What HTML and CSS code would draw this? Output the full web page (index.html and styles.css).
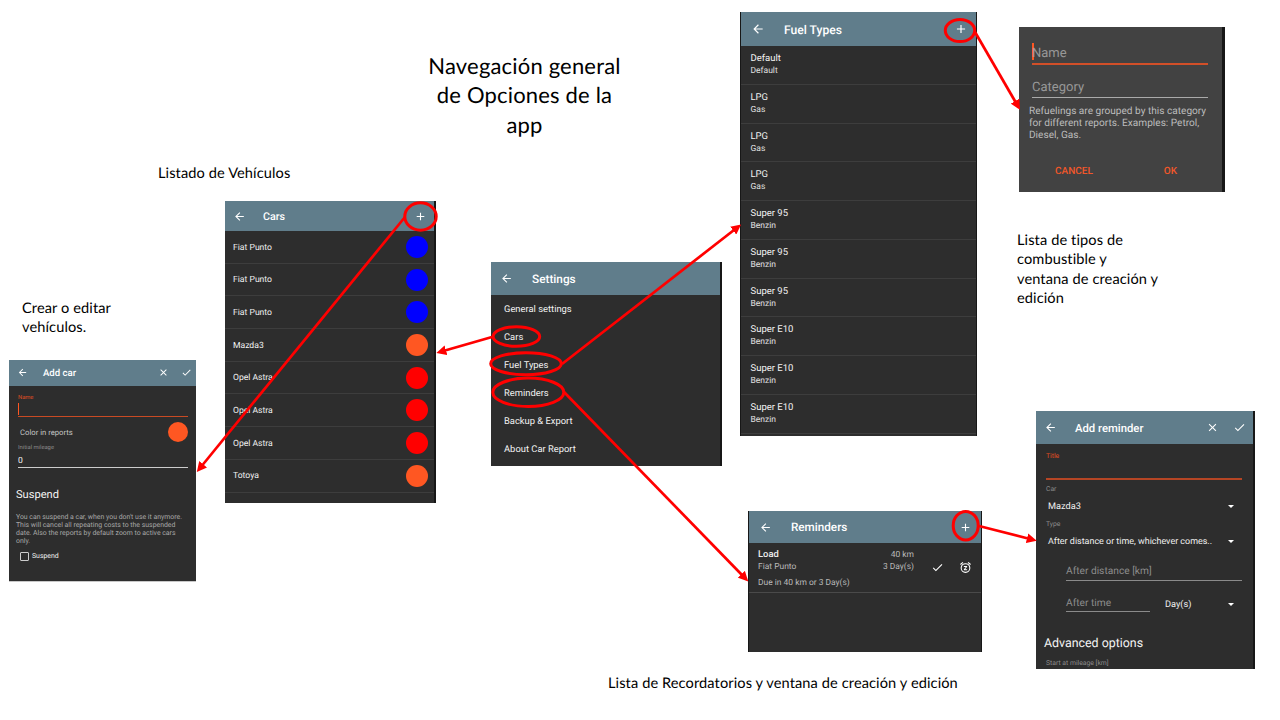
FILE: index.html
```html
<!DOCTYPE html>
<html lang="es">
<head>
<meta charset="utf-8">
<title>Navegación general de Opciones de la app</title>
<link rel="stylesheet" href="styles.css">
</head>
<body>
<svg class="defs" width="0" height="0">
  <symbol id="back" viewBox="0 0 24 24"><path d="M20 11H7.800l5.600-5.600L12 4l-8 8 8 8 1.400-1.400L7.800 13H20z"/></symbol>
  <symbol id="plus" viewBox="0 0 24 24"><path d="M19 13h-6v6h-2v-6H5v-2h6V5h2v6h6z"/></symbol>
  <symbol id="close" viewBox="0 0 24 24"><path d="M19 6.400 17.600 5 12 10.600 6.400 5 5 6.400 10.600 12 5 17.600 6.400 19 12 13.400 17.600 19 19 17.600 13.400 12z"/></symbol>
  <symbol id="check" viewBox="0 0 24 24"><path d="M9 16.200 4.800 12l-1.400 1.400L9 19 21 7l-1.400-1.400z"/></symbol>
  <symbol id="snooze" viewBox="0 0 24 24"><path d="M7.900 3.400 6.600 1.900 2 5.700l1.300 1.500zM22 5.700l-4.600-3.900-1.300 1.500 4.600 3.900zM12 4a9 9 0 1 0 0 18 9 9 0 0 0 0-18zm0 16a7 7 0 1 1 0-14 7 7 0 0 1 0 14zM9 11h3.600L9 15.200V17h6v-2h-3.600l3.600-4.200V9H9z"/></symbol>
</svg>
<main class="board">
  <h1 class="title">Navegación general<br>de Opciones de la<br>app</h1>
  <p class="note note-cars">Listado de Vehículos</p>
  <p class="note note-edit">Crear o editar<br>vehículos.</p>
  <p class="note note-fuel">Lista de tipos de<br>combustible y<br>ventana de creación y<br>edición</p>
  <p class="note note-reminders">Lista de Recordatorios y ventana de creación y edición</p>

  <section class="panel add-car">
    <header class="bar"><svg class="icon"><use href="#back"/></svg><h2>Add car</h2><svg class="icon"><use href="#close"/></svg><svg class="icon"><use href="#check"/></svg></header>
    <div class="form">
      <label class="hint active">Name</label>
      <div class="input focused"><i class="caret"></i></div>
      <div class="color-row"><span>Color in reports</span><i class="dot orange"></i></div>
      <label class="hint">Initial mileage</label>
      <div class="input mileage">0</div>
    </div>
    <h3>Suspend</h3>
    <p class="help">You can suspend a car, when you don't use it anymore.<br>This will cancel all repeating costs to the suspended<br>date. Also the reports by default zoom to active cars<br>only.</p>
    <div class="check-row"><i class="box"></i><span>Suspend</span></div>
  </section>

  <section class="panel cars">
    <header class="bar"><svg class="icon"><use href="#back"/></svg><h2>Cars</h2><svg class="icon"><use href="#plus"/></svg></header>
    <ul>
      <li><span>Fiat Punto</span><i class="dot blue"></i></li>
      <li><span>Fiat Punto</span><i class="dot blue"></i></li>
      <li><span>Fiat Punto</span><i class="dot blue"></i></li>
      <li><span>Mazda3</span><i class="dot orange"></i></li>
      <li><span>Opel Astra</span><i class="dot red"></i></li>
      <li><span>Opel Astra</span><i class="dot red"></i></li>
      <li><span>Opel Astra</span><i class="dot red"></i></li>
      <li><span>Totoya</span><i class="dot orange"></i></li>
    </ul>
  </section>

  <section class="panel settings">
    <header class="bar"><svg class="icon"><use href="#back"/></svg><h2>Settings</h2></header>
    <ul>
      <li>General settings</li>
      <li>Cars</li>
      <li>Fuel Types</li>
      <li>Reminders</li>
      <li>Backup &amp; Export</li>
      <li>About Car Report</li>
    </ul>
  </section>

  <section class="panel fuel">
    <header class="bar"><svg class="icon"><use href="#back"/></svg><h2>Fuel Types</h2><svg class="icon"><use href="#plus"/></svg></header>
    <ul>
      <li><b>Default</b><small>Default</small></li>
      <li><b>LPG</b><small>Gas</small></li>
      <li><b>LPG</b><small>Gas</small></li>
      <li><b>LPG</b><small>Gas</small></li>
      <li><b>Super 95</b><small>Benzin</small></li>
      <li><b>Super 95</b><small>Benzin</small></li>
      <li><b>Super 95</b><small>Benzin</small></li>
      <li><b>Super E10</b><small>Benzin</small></li>
      <li><b>Super E10</b><small>Benzin</small></li>
      <li><b>Super E10</b><small>Benzin</small></li>
    </ul>
  </section>

  <section class="panel dialog">
    <div class="field name"><i class="caret"></i>Name</div>
    <div class="field category">Category</div>
    <p>Refuelings are grouped by this category<br>for different reports. Examples: Petrol,<br>Diesel, Gas.</p>
    <div class="actions"><span class="cancel">CANCEL</span><span>OK</span></div>
  </section>

  <section class="panel reminders">
    <header class="bar"><svg class="icon"><use href="#back"/></svg><h2>Reminders</h2><svg class="icon"><use href="#plus"/></svg></header>
    <div class="reminder">
      <div class="what"><b>Load</b><span>Fiat Punto</span><span class="due">Due in 40 km or 3 Day(s)</span></div>
      <div class="when"><span>40 km</span><span>3 Day(s)</span></div>
      <svg class="icon"><use href="#check"/></svg>
      <svg class="icon"><use href="#snooze"/></svg>
    </div>
  </section>

  <section class="panel add-reminder">
    <header class="bar"><svg class="icon"><use href="#back"/></svg><h2>Add reminder</h2><svg class="icon"><use href="#close"/></svg><svg class="icon"><use href="#check"/></svg></header>
    <label class="hint active">Title</label>
    <div class="line"></div>
    <label class="hint">Car</label>
    <div class="select"><span>Mazda3</span><i class="arrow"></i></div>
    <label class="hint type">Type</label>
    <div class="select kind"><span>After distance or time, whichever comes..</span><i class="arrow"></i></div>
    <div class="after distance">After distance [km]</div>
    <div class="time-row"><div class="after time">After time</div><div class="select"><span>Day(s)</span><i class="arrow"></i></div></div>
    <h3>Advanced options</h3>
    <label class="hint mileage">Start at mileage [km]</label>
  </section>

  <svg class="links" viewBox="0 0 1280 720">
    <defs><marker id="head" markerUnits="userSpaceOnUse" markerWidth="11" markerHeight="10" refX="1" refY="5" orient="auto"><path d="M0 0 10 5 0 10z"/></marker></defs>
    <g class="rings">
      <ellipse cx="420.500" cy="216.500" rx="15.700" ry="13.700"/>
      <ellipse cx="516.400" cy="336.500" rx="23.300" ry="9.800"/>
      <ellipse cx="526" cy="363.700" rx="35.300" ry="11"/>
      <ellipse cx="528.300" cy="392.300" rx="35.500" ry="14.200"/>
      <ellipse cx="960" cy="30.600" rx="14.700" ry="11"/>
      <ellipse cx="965.700" cy="525.700" rx="12.500" ry="14.300"/>
    </g>
    <g class="arrows">
      <path d="M405 217 202.500 465"/>
      <path d="M492 337 445 350.500"/>
      <path d="M562 364 734 230"/>
      <path d="M564 392 742 575"/>
      <path d="M975 32 1015.500 102"/>
      <path d="M979 526 1028 538.500"/>
    </g>
  </svg>
</main>
</body>
</html>
```
FILE: styles.css
```css
* { box-sizing: border-box; margin: 0; padding: 0; }
body { background: #fff; overflow: hidden; font-family: Roboto, sans-serif; text-rendering: geometricPrecision; }
ul { list-style: none; }
i { font-style: normal; flex: none; }
b { font-weight: 400; }
.defs { display: block; position: absolute; }
.board { position: relative; width: 1280px; height: 720px; overflow: hidden; }

/* slide captions */
.title, .note { position: absolute; font-family: Lato, sans-serif; font-weight: 400; font-variant-ligatures: none; color: #000; white-space: nowrap; }
.title { left: 404px; top: 51px; width: 241px; text-align: center; font-size: 22px; line-height: 29.300px; letter-spacing: .18px; }
.note { font-size: 14.600px; line-height: 19.300px; letter-spacing: .1px; }
.note-cars { left: 158px; top: 164px; }
.note-edit { left: 22px; top: 299px; }
.note-fuel { left: 1017px; top: 231px; }
.note-reminders { left: 608px; top: 674px; }

/* app screens */
.panel { position: absolute; background: #2d2d2d; color: #f2f2f2; overflow: hidden; white-space: nowrap; }
.bar { display: flex; align-items: center; background: #607d8b; color: #fff; }
.bar h2 { flex: 1; font-weight: 500; }
.icon { flex: none; fill: #fff; }
.dot { border-radius: 50%; }
.blue { background: #00f; }
.orange { background: #ff5722; }
.red { background: #f00; }
.hint { display: block; color: #8c8c8c; }
.hint.active { color: #e04e22; }

.add-car { left: 9px; top: 360px; width: 187px; height: 222px; border-bottom: 1px solid #c8c8c8; }
.add-car .bar { height: 26px; padding: 0 4px 1px 8px; }
.add-car .icon { width: 11px; height: 11px; margin-right: 12px; }
.add-car .icon:last-child { margin-right: 0; }
.add-car h2 { font-size: 9.600px; margin-left: 3px; padding-top: 2px; }
.add-car .form { padding: 8px 8px 0 9px; }
.add-car .hint { font-size: 5.800px; line-height: 8px; }
.input { border-bottom: 1px solid #ccc; }
.input.focused { height: 15px; border-bottom: 1.500px solid #c94a23; padding-top: 1px; }
.input .caret { display: block; width: 1px; height: 12px; background: #ff5722; }
.color-row { display: flex; align-items: center; justify-content: space-between; height: 20px; margin-top: 5px; padding-left: 2px; font-size: 7.700px; color: #c4c4c4; }
.color-row .dot { width: 20px; height: 20px; }
.add-car .form .hint:nth-of-type(2) { margin-top: 2px; }
.input.mileage { height: 16px; padding-top: 4px; font-size: 8.500px; line-height: 10px; }
.add-car h3 { margin: 18px 0 0 7px; font-size: 11.100px; line-height: 17px; font-weight: 400; color: #f4f4f4; }
.help { margin: 10px 0 0 7px; font-size: 6.900px; line-height: 8.050px; color: #a8a8a8; }
.check-row { display: flex; align-items: center; gap: 3px; margin: 7px 0 0 11px; font-size: 6.900px; line-height: 9px; }
.box { width: 9px; height: 9px; border: 1.300px solid #ccc; border-radius: 1px; }

.cars { left: 225px; top: 201px; width: 211px; height: 302px; border-right: 2px solid #171717; }
.cars .bar { height: 30px; padding: 0 7px 0 8px; }
.cars .icon { width: 13px; height: 13px; }
.cars h2 { font-size: 10.700px; margin-left: 17px; }
.cars li { display: flex; align-items: center; justify-content: space-between; height: 32.700px; padding: 0 6px 0 8px; border-bottom: 1px solid #3d3d3d; font-size: 8.600px; }
.cars li span { padding-top: 1.500px; }
.cars .dot { width: 22px; height: 22px; }

.settings { left: 491px; top: 262px; width: 231px; height: 204px; border-right: 2px solid #171717; }
.settings .bar { height: 32.500px; padding-left: 9px; }
.settings .icon { width: 13px; height: 13px; }
.settings h2 { font-size: 11.800px; margin-left: 19px; padding-top: 1px; }
.settings ul { padding-top: 1px; }
.settings li { height: 28.100px; line-height: 28.500px; padding-left: 13px; font-size: 9.400px; }

.fuel { left: 740px; top: 12px; width: 237px; height: 424px; border: solid #171717; border-width: 0 1px; }
.fuel .bar { height: 34px; padding: 0 8px 0 10px; }
.fuel .icon { width: 14px; height: 14px; }
.fuel h2 { font-size: 12.100px; margin-left: 19px; padding-top: 1px; }
.fuel li { height: 38.750px; padding: 7px 0 0 9.500px; border-bottom: 1px solid #3d3d3d; }
.fuel b, .fuel small { display: block; }
.fuel b { font-size: 9.500px; line-height: 12px; }
.fuel small { font-size: 8.500px; line-height: 12px; color: #e0e0e0; }

.dialog { left: 1019px; top: 27px; width: 206px; height: 165px; background: #424242; border-right: 3px solid #171717; padding: 14px 14px 0 10px; }
.field { margin-left: 3px; font-size: 13px; line-height: 25px; color: #989898; border-bottom: 1px solid #aaa; }
.field.name { display: flex; height: 24px; border-bottom: 2px solid #d24f28; }
.field .caret { width: 1.500px; height: 17px; margin: 2px -1.500px 0 0; background: #ff5722; }
.field.category { height: 22px; margin-top: 11px; line-height: 24px; }
.dialog p { margin-top: 8px; font-size: 10.100px; line-height: 12px; color: #bcbcbc; }
.actions { display: flex; gap: 71px; margin: 23px 0 0 26px; font-size: 10px; line-height: 14px; font-weight: 500; color: #f1572a; }

.reminders { left: 748px; top: 511px; width: 234px; height: 141px; border: solid #171717; border-width: 0 1px; }
.reminders .bar { height: 32px; padding: 0 9px 0 10px; }
.reminders .icon { width: 13px; height: 13px; }
.reminders h2 { font-size: 11.700px; margin-left: 19px; }
.reminder { display: flex; height: 50px; padding: 6px 9px 0 9px; border-bottom: 1px solid #4a4a4a; font-size: 8.450px; line-height: 12px; color: #bababa; }
.reminder .what, .reminder .when { display: flex; flex-direction: column; }
.reminder .what { flex: 1; }
.reminder b { font-size: 9.400px; font-weight: 500; color: #eee; }
.reminder .due { margin-top: 4px; }
.reminder .when { text-align: right; }
.reminder .icon { margin: 12px 0 0 17px; }
.reminder .icon + .icon { margin-left: 15px; }

.add-reminder { left: 1036px; top: 411px; width: 219px; height: 258px; border-right: 2px solid #171717; }
.add-reminder .bar { height: 33px; padding: 0 7px 0 8px; margin-bottom: 8px; }
.add-reminder .icon { width: 13px; height: 13px; margin-right: 14px; }
.add-reminder .icon:last-child { margin-right: 0; }
.add-reminder h2 { font-size: 11.300px; margin-left: 4px; padding-top: 2px; }
.add-reminder .hint { padding-left: 10px; font-size: 6.800px; line-height: 9px; }
.line { height: 18px; margin: 1px 11px 5px 10px; border-bottom: 2px solid #b54524; }
.select { display: flex; align-items: center; justify-content: space-between; height: 12px; margin-top: 6px; padding: 0 19px 0 12px; font-size: 9.200px; color: #f0f0f0; }
.arrow { border: solid transparent; border-width: 3px 3px 0; border-top-color: #fff; }
.hint.type { margin-top: 8px; }
.select.kind { margin-top: 6px; font-size: 8.950px; }
.select.kind span { padding-top: 2px; }
.after { border-bottom: 1px solid #8a8a8a; font-size: 10.200px; line-height: 18px; color: #8c8c8c; }
.distance { height: 18px; margin: 16px 11px 0 30px; }
.time-row { display: flex; padding-left: 30px; margin-top: 13px; }
.time { width: 84px; height: 18px; line-height: 20px; }
.time-row .select { flex: 1; margin-top: 4px; padding-left: 15px; }
.add-reminder h3 { margin: 22px 0 0 8px; font-size: 12.400px; line-height: 19px; font-weight: 400; color: #f4f4f4; }
.add-reminder .hint.mileage { margin-top: 6px; }

/* connectors drawn over the screens */
.links { position: absolute; left: 0; top: 0; width: 1280px; height: 720px; }
.rings, .arrows { fill: none; stroke: #f00; stroke-width: 3px; }
.arrows { stroke-width: 2.700px; }
.arrows path { marker-end: url(#head); }
#head path { fill: #f00; stroke: none; }
```
